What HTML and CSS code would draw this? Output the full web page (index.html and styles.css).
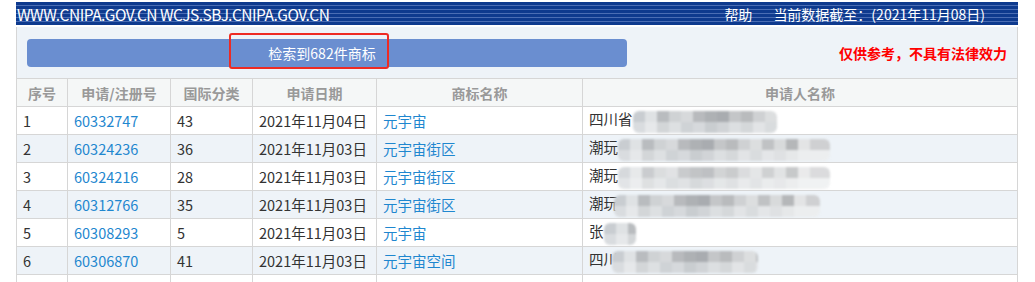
FILE: index.html
```html
<!DOCTYPE html>
<html lang="zh-CN">
<head>
    <meta charset="UTF-8">
    <title>商标检索结果</title>
    <link rel="stylesheet" href="styles.css">
</head>
<body>
    <div class="page">
        <div class="topbar">
            <span class="site">WWW.CNIPA.GOV.CN WCJS.SBJ.CNIPA.GOV.CN</span>
            <span class="links">
                <a href="#">帮助</a>
                <span>当前数据截至：(2021年11月08日)</span>
            </span>
        </div>

        <div class="panel">
            <div class="count-bar">检索到682件商标</div>
            <div class="mark"></div>
            <span class="notice">仅供参考，不具有法律效力</span>
        </div>

        <table class="result">
            <thead>
                <tr>
                    <th class="c-no">序号</th>
                    <th class="c-reg">申请/注册号</th>
                    <th class="c-cls">国际分类</th>
                    <th class="c-date">申请日期</th>
                    <th class="c-name">商标名称</th>
                    <th>申请人名称</th>
                </tr>
            </thead>
            <tbody>
                <tr>
                    <td>1</td>
                    <td><a href="#">60332747</a></td>
                    <td>43</td>
                    <td>2021年11月04日</td>
                    <td><a href="#">元宇宙</a></td>
                    <td>四川省<span class="blur w1"></span></td>
                </tr>
                <tr>
                    <td>2</td>
                    <td><a href="#">60324236</a></td>
                    <td>36</td>
                    <td>2021年11月03日</td>
                    <td><a href="#">元宇宙街区</a></td>
                    <td>潮玩<span class="blur w2"></span></td>
                </tr>
                <tr>
                    <td>3</td>
                    <td><a href="#">60324216</a></td>
                    <td>28</td>
                    <td>2021年11月03日</td>
                    <td><a href="#">元宇宙街区</a></td>
                    <td>潮玩<span class="blur w2 light"></span></td>
                </tr>
                <tr>
                    <td>4</td>
                    <td><a href="#">60312766</a></td>
                    <td>35</td>
                    <td>2021年11月03日</td>
                    <td><a href="#">元宇宙街区</a></td>
                    <td>潮玩<span class="blur w3"></span></td>
                </tr>
                <tr>
                    <td>5</td>
                    <td><a href="#">60308293</a></td>
                    <td>5</td>
                    <td>2021年11月03日</td>
                    <td><a href="#">元宇宙</a></td>
                    <td>张<span class="blur w4"></span></td>
                </tr>
                <tr>
                    <td>6</td>
                    <td><a href="#">60306870</a></td>
                    <td>41</td>
                    <td>2021年11月03日</td>
                    <td><a href="#">元宇宙空间</a></td>
                    <td>四川<span class="blur w5"></span></td>
                </tr>
                <tr>
                    <td></td><td></td><td></td><td></td><td></td><td></td>
                </tr>
            </tbody>
        </table>
    </div>
</body>
</html>
```

FILE: styles.css
```css
body {
    margin: 0;
    font-family: "Noto Sans CJK SC", "Microsoft YaHei", sans-serif;
    color: #333;
    background: #fff;
}
a {
    color: #1f87cf;
    text-decoration: none;
}
.page {
    width: 1002px;
    margin-left: 16px;
    padding-top: 2px;
}

/* top strip with blue pinstripes */
.topbar {
    height: 23px;
    display: flex;
    align-items: center;
    justify-content: space-between;
    padding: 0 33px 0 1px;
    color: #fff;
    background: repeating-linear-gradient(to bottom, #0e3a8e 0, #0e3a8e 3px, #4a6db4 3px, #4a6db4 4px);
}
.site {
    font-size: 15.5px;
    letter-spacing: -0.5px;
}
.links {
    font-size: 14px;
    display: flex;
    gap: 21px;
}
.links a {
    color: #fff;
}

.panel {
    position: relative;
    margin-top: 2px;
    height: 51px;
    display: flex;
    align-items: center;
    background: #eef3f8;
    border-left: 1px solid #d6d6d6;
    border-right: 1px solid #d6d6d6;
}
.count-bar {
    margin-left: 10px;
    width: 600px;
    height: 28px;
    line-height: 28px;
    border-radius: 4px;
    background: #6a8ed0;
    color: #fff;
    font-size: 14px;
    text-align: center;
    text-indent: -10px;
}
.mark {
    position: absolute;
    left: 212px;
    top: 6px;
    width: 156px;
    height: 32px;
    border: 2px solid #ee2b24;
    border-radius: 3px;
}
.notice {
    margin-left: auto;
    margin-right: 10px;
    color: #ff0000;
    font-size: 14px;
    font-weight: bold;
}

.result {
    width: 1002px;
    border-collapse: collapse;
    table-layout: fixed;
    font-size: 14.5px;
}
.result th,
.result td {
    box-sizing: border-box;
    height: 28px;
    border: 1px solid #d6d6d6;
    padding: 0 6px;
    white-space: nowrap;
    overflow: hidden;
}
.result th {
    background: #f5f7f7;
    color: #999;
    font-weight: bold;
    font-size: 14px;
}
.result td {
    text-align: left;
}
.result tbody tr:nth-child(even) td {
    background: #eef3f8;
}
.c-no { width: 51px; }
.c-reg { width: 103px; }
.c-cls { width: 82px; }
.c-date { width: 124px; }
.c-name { width: 206px; }

/* masked applicant names */
.blur {
    display: inline-block;
    vertical-align: middle;
    height: 22px;
    border-radius: 6px;
    filter: blur(0.8px);
    background:
        linear-gradient(to right,
            #c9cdd1 0 12px, #dfe2e4 12px 24px, #b9bcbf 24px 36px, #cfd2d4 36px 48px,
            #d7d9db 48px 60px, #b8babd 60px 72px, #aeb1b4 72px 84px, #a9acb0 84px 96px,
            #c4c6c8 96px 108px, #b9bbbd 108px 120px, #cfd1d3 120px 132px, #dcdedf 132px 144px,
            #c0c2c4 144px 156px, #d8dadb 156px 168px, #b5b7b9 168px 180px, #e3e4e5 180px 192px,
            #cfd0d2 192px 210px) top / 100% 50% no-repeat,
        linear-gradient(to right,
            #d9dcdf 0 12px, #e6e8ea 12px 24px, #d3d6d8 24px 36px, #dde0e2 36px 48px,
            #cfd3d6 48px 60px, #d6d9dc 60px 72px, #c9cdd0 72px 84px, #d1d4d7 84px 96px,
            #dcdfe1 96px 108px, #d5d8da 108px 120px, #e2e4e6 120px 132px, #d9dcde 132px 144px,
            #e4e6e8 144px 156px, #dfe1e3 156px 168px, #e6e8e9 168px 180px, #eceeef 180px 210px) bottom / 100% 50% no-repeat;
}
.blur.light {
    opacity: 0.75;
}
.w1 { width: 144px; }
.w2 { width: 212px; }
.w3 { width: 206px; margin-left: -4px; }
.w4 { width: 32px; }
.w5 { width: 146px; margin-left: -6px; }
```
